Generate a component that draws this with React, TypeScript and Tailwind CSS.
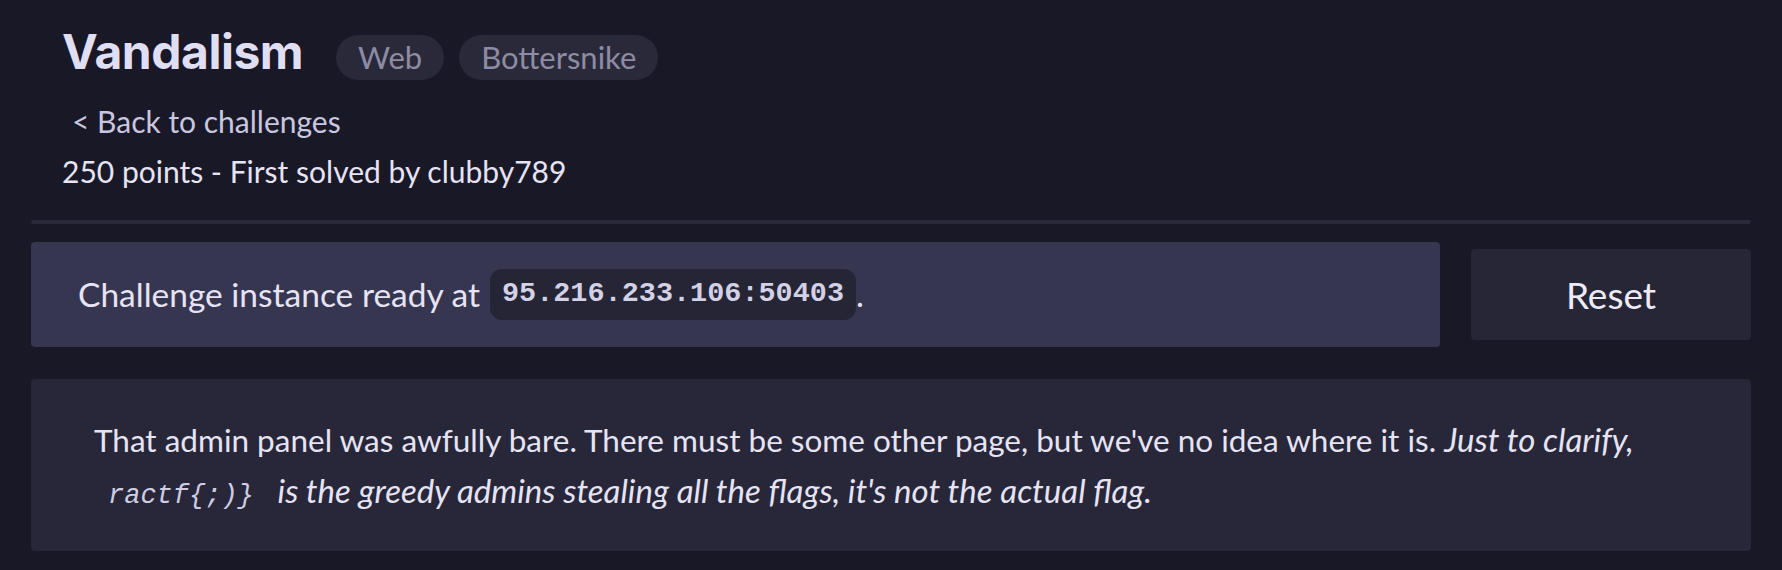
import React from 'react';

const Pill: React.FC<{ label: string }> = ({ label }) => (
  <span className="inline-flex h-[45px] items-center rounded-full bg-[#2a2939] px-[22px] text-[31px] text-[#8e8ca4]">
    {label}
  </span>
);

export default function App() {
  return (
    <div className="min-h-screen bg-[#191827] px-[31px] pt-[23px] pb-[20px] font-['Lato','Noto_Sans',sans-serif] text-[#e6e4f4]">
      {/* Header */}
      <div className="pl-[31px]">
        <div className="flex items-center">
          <h1 className="font-['Inter',sans-serif] text-[48px] font-bold leading-[56px] tracking-[-0.5px] text-[#e0def2]">
            Vandalism
          </h1>
          <div className="mt-[12px] ml-[33px] flex gap-[15px]">
            <Pill label="Web" />
            <Pill label="Bottersnike" />
          </div>
        </div>
        <a className="mt-[23px] block pl-[10px] text-[30px] leading-[36px] text-[#c9c7e0]">
          &lt; Back to challenges
        </a>
        <p className="mt-[14px] text-[30px] leading-[36px]">250 points - First solved by clubby789</p>
      </div>

      <div className="mt-[31px] h-[4px] rounded bg-[#2a2939]" />

      {/* Instance */}
      <div className="mt-[18px] flex items-center gap-[31px]">
        <div className="flex h-[105px] flex-1 items-center rounded-[4px] bg-[#373650] pl-[47px] text-[33.5px]">
          <span>Challenge instance ready at</span>
          <code className="ml-[10px] rounded-[12px] bg-[#262536] px-[12px] py-[4px] font-['Liberation_Mono',monospace] text-[28.5px] font-bold text-[#d3d1e6]">
            95.216.233.106:50403
          </code>
          <span>.</span>
        </div>
        <button className="h-[91px] w-[280px] rounded-[4px] bg-[#272637] text-[37px] text-[#ecebf6]">
          Reset
        </button>
      </div>

      {/* Description */}
      <div className="mt-[32px] rounded-[4px] bg-[#282739] px-[63px] pt-[35px] pb-[35px] text-[31.5px] leading-[50px]">
        That admin panel was awfully bare. There must be some other page, but we've no idea where it is.{' '}
        <em className="text-[33px]">
          Just to clarify,{' '}
          <code className="pl-[14px] pr-[16px] font-['Liberation_Mono',monospace] text-[27px] leading-none text-[#cfcde2]">{'ractf{;)}'}</code>{' '}
          is the greedy admins stealing all the flags, it's not the actual flag.
        </em>
      </div>
    </div>
  );
}
